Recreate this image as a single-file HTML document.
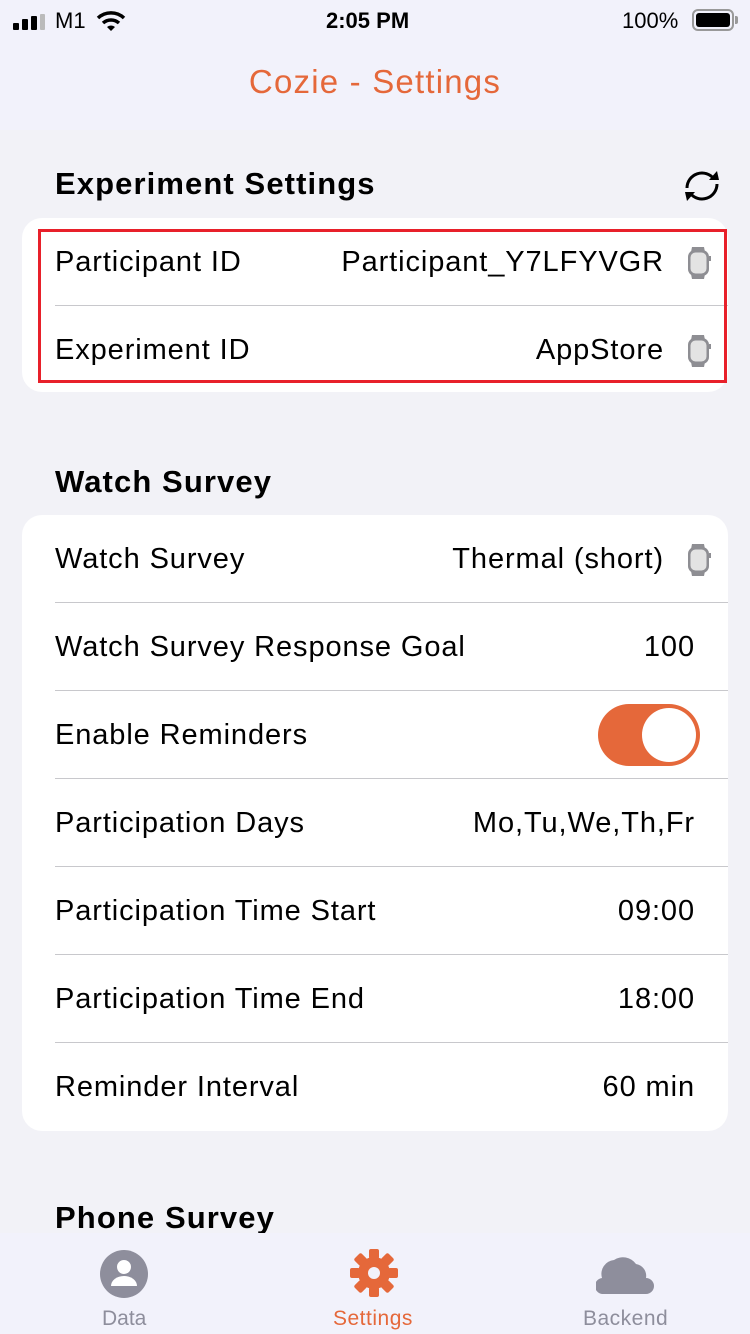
<!DOCTYPE html>
<html><head><meta charset="utf-8"><style>
*{margin:0;padding:0;box-sizing:border-box}
body{width:750px;height:1334px;overflow:hidden;background:#f2f2f7;font-family:"Liberation Sans",sans-serif;position:relative;color:#000}
.hdr{position:absolute;left:0;top:0;width:750px;height:130px;background:#f2f2fb}
.abs{position:absolute;white-space:nowrap}
.card{position:absolute;left:22px;width:706px;background:#fff;border-radius:20px}
.row{position:absolute;left:33px;right:0;height:88px;font-size:29px;line-height:88px;letter-spacing:0.9px}
.row .v{position:absolute;right:33px;top:0}
.row.w .v{right:64px}
.sep{position:absolute;left:33px;right:0;height:1px;background:#c8c8cc}
.watch{position:absolute;right:16px;top:28px;width:26px;height:34px}
h2{position:absolute;left:55px;font-size:31px;font-weight:bold;letter-spacing:1.1px}
</style></head><body>
<div class="hdr"></div>
<div class="abs" style="left:13px;top:14px">
<svg width="36" height="16"><rect x="0" y="9" width="6" height="7" rx="1"/><rect x="9" y="5" width="6" height="11" rx="1"/><rect x="18" y="2" width="6" height="14" rx="1"/><rect x="27" y="0" width="5" height="16" rx="1" fill="#bbb"/></svg></div>
<div class="abs" style="left:55px;top:8px;font-size:22px">M1</div>
<svg class="abs" style="left:96px;top:10px" width="30" height="22" viewBox="0 0 30 22"><path d="M2 8a19 19 0 0 1 26 0" stroke="#000" stroke-width="3.5" fill="none"/><path d="M7 13a12 12 0 0 1 16 0" stroke="#000" stroke-width="3.5" fill="none"/><path d="M11 17l4 4 4-4a6 6 0 0 0-8 0z"/></svg>
<div class="abs" style="left:326px;top:8px;font-size:22px;font-weight:bold">2:05 PM</div>
<div class="abs" style="left:622px;top:8px;font-size:22px">100%</div>
<div class="abs" style="left:692px;top:9px;width:42px;height:22px;border:2px solid #999;border-radius:6px;padding:2px"><div style="width:100%;height:100%;background:#000;border-radius:3px"></div></div>
<div class="abs" style="left:735px;top:16px;width:3px;height:8px;background:#999;border-radius:0 2px 2px 0"></div>
<div class="abs" style="left:0;width:750px;top:63px;text-align:center;font-size:33px;letter-spacing:1.2px;color:#e5683a">Cozie - Settings</div>

<h2 style="top:166px">Experiment Settings</h2>
<svg class="abs" style="left:681px;top:166px" width="42" height="40" viewBox="0 0 42 40"><path d="M6 22A15 15 0 0 1 33 13" stroke="#000" stroke-width="3" fill="none"/><path d="M36 18A15 15 0 0 1 9 27" stroke="#000" stroke-width="3" fill="none"/><path d="M28 14l10 0-2-9z"/><path d="M14 26l-10 0 2 9z"/></svg>

<div class="card" style="top:218px;height:174px">
<div class="row w" style="top:0">Participant ID<span class="v">Participant_Y7LFYVGR</span><svg class="watch" viewBox="0 0 26 34"><path d="M6 1h12l1 5H5z M5 28h14l-1 5H6z" fill="#8e8e93"/><rect x="2" y="4" width="21" height="26" rx="7" fill="#8e8e93"/><rect x="23" y="10" width="2" height="5" fill="#8e8e93"/><rect x="4.5" y="6.5" width="16" height="21" rx="5" fill="#e3e3e3"/></svg></div>
<div class="sep" style="top:87px"></div>
<div class="row w" style="top:88px">Experiment ID<span class="v">AppStore</span><svg class="watch" viewBox="0 0 26 34"><path d="M6 1h12l1 5H5z M5 28h14l-1 5H6z" fill="#8e8e93"/><rect x="2" y="4" width="21" height="26" rx="7" fill="#8e8e93"/><rect x="23" y="10" width="2" height="5" fill="#8e8e93"/><rect x="4.5" y="6.5" width="16" height="21" rx="5" fill="#e3e3e3"/></svg></div>
</div>
<div class="abs" style="left:38px;top:229px;width:689px;height:154px;border:3px solid #e8202a"></div>

<h2 style="top:464px">Watch Survey</h2>
<div class="card" style="top:515px;height:616px">
<div class="row w" style="top:0">Watch Survey<span class="v">Thermal (short)</span><svg class="watch" viewBox="0 0 26 34"><path d="M6 1h12l1 5H5z M5 28h14l-1 5H6z" fill="#8e8e93"/><rect x="2" y="4" width="21" height="26" rx="7" fill="#8e8e93"/><rect x="23" y="10" width="2" height="5" fill="#8e8e93"/><rect x="4.5" y="6.5" width="16" height="21" rx="5" fill="#e3e3e3"/></svg></div>
<div class="sep" style="top:87px"></div>
<div class="row" style="top:88px">Watch Survey Response Goal<span class="v">100</span></div>
<div class="sep" style="top:175px"></div>
<div class="row" style="top:176px">Enable Reminders<span style="position:absolute;right:28px;top:13px;width:102px;height:62px;border-radius:31px;background:#e5683a"><span style="position:absolute;right:4px;top:4px;width:54px;height:54px;border-radius:50%;background:#fff"></span></span></div>
<div class="sep" style="top:263px"></div>
<div class="row" style="top:264px">Participation Days<span class="v">Mo,Tu,We,Th,Fr</span></div>
<div class="sep" style="top:351px"></div>
<div class="row" style="top:352px">Participation Time Start<span class="v">09:00</span></div>
<div class="sep" style="top:439px"></div>
<div class="row" style="top:440px">Participation Time End<span class="v">18:00</span></div>
<div class="sep" style="top:527px"></div>
<div class="row" style="top:528px">Reminder Interval<span class="v">60 min</span></div>
</div>

<h2 style="top:1200px">Phone Survey</h2>
<div class="abs" style="left:0;top:1233px;width:750px;height:101px;background:#f2f2fb"></div>
<svg class="abs" style="left:100px;top:1250px" width="48" height="48" viewBox="0 0 48 48"><circle cx="24" cy="24" r="24" fill="#8e8e9c"/><circle cx="24" cy="17" r="7" fill="#fff"/><path d="M11 36a13 10 0 0 1 26 0z" fill="#fff"/></svg>
<div class="abs" style="left:102px;top:1307px;font-size:21px;color:#8e8e9c">Data</div>
<svg class="abs" style="left:349px;top:1248px" width="50" height="50" viewBox="0 0 50 50"><g fill="#e5683a" transform="translate(25 25)"><circle r="16"/><g id="t"><rect x="-5" y="-24" width="10" height="10" rx="2"/></g><use href="#t" transform="rotate(45)"/><use href="#t" transform="rotate(90)"/><use href="#t" transform="rotate(135)"/><use href="#t" transform="rotate(180)"/><use href="#t" transform="rotate(225)"/><use href="#t" transform="rotate(270)"/><use href="#t" transform="rotate(315)"/></g><circle cx="25" cy="25" r="6" fill="#f2f2fb"/></svg>
<div class="abs" style="left:333px;top:1307px;font-size:21px;letter-spacing:0.5px;color:#e5683a">Settings</div>
<svg class="abs" style="left:596px;top:1252px" width="58" height="42" viewBox="0 0 58 42"><path d="M8 42a8 8 0 0 1-2-16 14 14 0 0 1 12-18 16 16 0 0 1 22 4 12 12 0 0 1 10 14 8 8 0 0 1 0 16z" fill="#8e8e9c"/></svg>
<div class="abs" style="left:583px;top:1307px;font-size:21px;letter-spacing:0.5px;color:#8e8e9c">Backend</div>
</body></html>
